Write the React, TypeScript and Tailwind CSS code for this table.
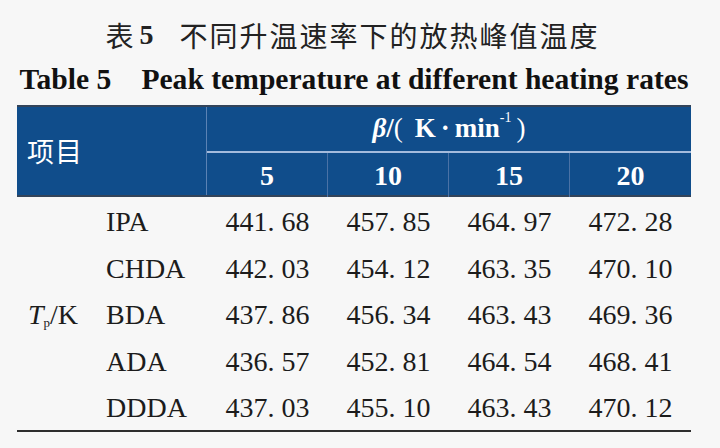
import React from "react";

const rows = [
  { name: "IPA", values: ["441. 68", "457. 85", "464. 97", "472. 28"] },
  { name: "CHDA", values: ["442. 03", "454. 12", "463. 35", "470. 10"] },
  { name: "BDA", values: ["437. 86", "456. 34", "463. 43", "469. 36"] },
  { name: "ADA", values: ["436. 57", "452. 81", "464. 54", "468. 41"] },
  { name: "DDDA", values: ["437. 03", "455. 10", "463. 43", "470. 12"] },
];

const rates = ["5", "10", "15", "20"];

const serif = "font-['Liberation_Serif','Times_New_Roman',serif]";
const cjk = "font-['Noto_Sans_CJK_SC','Noto_Sans',sans-serif]";

const App = () => {
  return (
    <div className="w-[720px] h-[448px] bg-[#f7f7f7] overflow-hidden">
      <div className="ml-[17px] w-[674px] flex flex-col">
        {/* Titles */}
        <div className={`mt-[21px] h-[28px] flex items-center justify-center text-[28px] leading-[28px] text-[#222] ${cjk}`}>
          <span className="ml-[-3px]">表</span>
          <span className={`ml-[6px] font-bold ${serif}`}>5</span>
          <span className="ml-[26px] tracking-[2px]">不同升温速率下的放热峰值温度</span>
        </div>
        <div className={`mt-[15px] h-[30px] flex justify-center text-[29.6px] leading-[30px] font-bold text-[#111] ${serif}`}>
          <span>Table 5</span>
          <span className="ml-[30px]">Peak temperature at different heating rates</span>
        </div>

        {/* Header */}
        <div className="mt-[11px] flex bg-[#104d8b] border-y-2 border-[#33445a] text-white">
          <div className={`w-[190px] flex items-center pl-[10px] text-[27px] tracking-[1px] border-r border-[#5b82b4] ${cjk}`}>
            项目
          </div>
          <div className="flex-1 flex flex-col">
            <div className={`h-[44px] flex items-center justify-center pb-[2px] text-[27px] font-bold ${serif}`}>
              <span className="italic">β</span>
              <span>/</span>
              <span className="font-normal">(</span>
              <span className="ml-[12px]">K</span>
              <span className="mx-[5px]">·</span>
              <span>min</span>
              <sup className="text-[14px] font-normal -top-[10px]">-1</sup>
              <span className="ml-[5px] font-normal">)</span>
            </div>
            <div className="h-[2px] bg-[#a4bbdd]" />
            <div className={`h-[42px] grid grid-cols-4 text-[28px] font-bold ${serif}`}>
              {rates.map((r, i) => (
                <div
                  key={r}
                  className={`flex items-center justify-center pt-[2px] ${i < 3 ? "border-r border-[#4a72a6]" : ""}`}
                >
                  {r}
                </div>
              ))}
            </div>
          </div>
        </div>

        {/* Body */}
        <div className={`text-[28px] text-[#1c1c1c] ${serif}`}>
          {rows.map((row, idx) => (
            <div key={row.name} className="h-[46.5px] grid grid-cols-[89px_101px_121px_121px_121px_121px] items-center pt-[4px]">
              <div className="pl-[11px]">
                {idx === 2 && (
                  <span>
                    <span className="italic">T</span>
                    <sub className="text-[13px] -bottom-[3px]">p</sub>
                    <span>/K</span>
                  </span>
                )}
              </div>
              <div>{row.name}</div>
              {row.values.map((v, i) => (
                <div key={i} className="text-center">
                  {v}
                </div>
              ))}
            </div>
          ))}
        </div>
        <div className="h-[2px] bg-[#2e2e2e]" />
      </div>
    </div>
  );
};

export default App;
